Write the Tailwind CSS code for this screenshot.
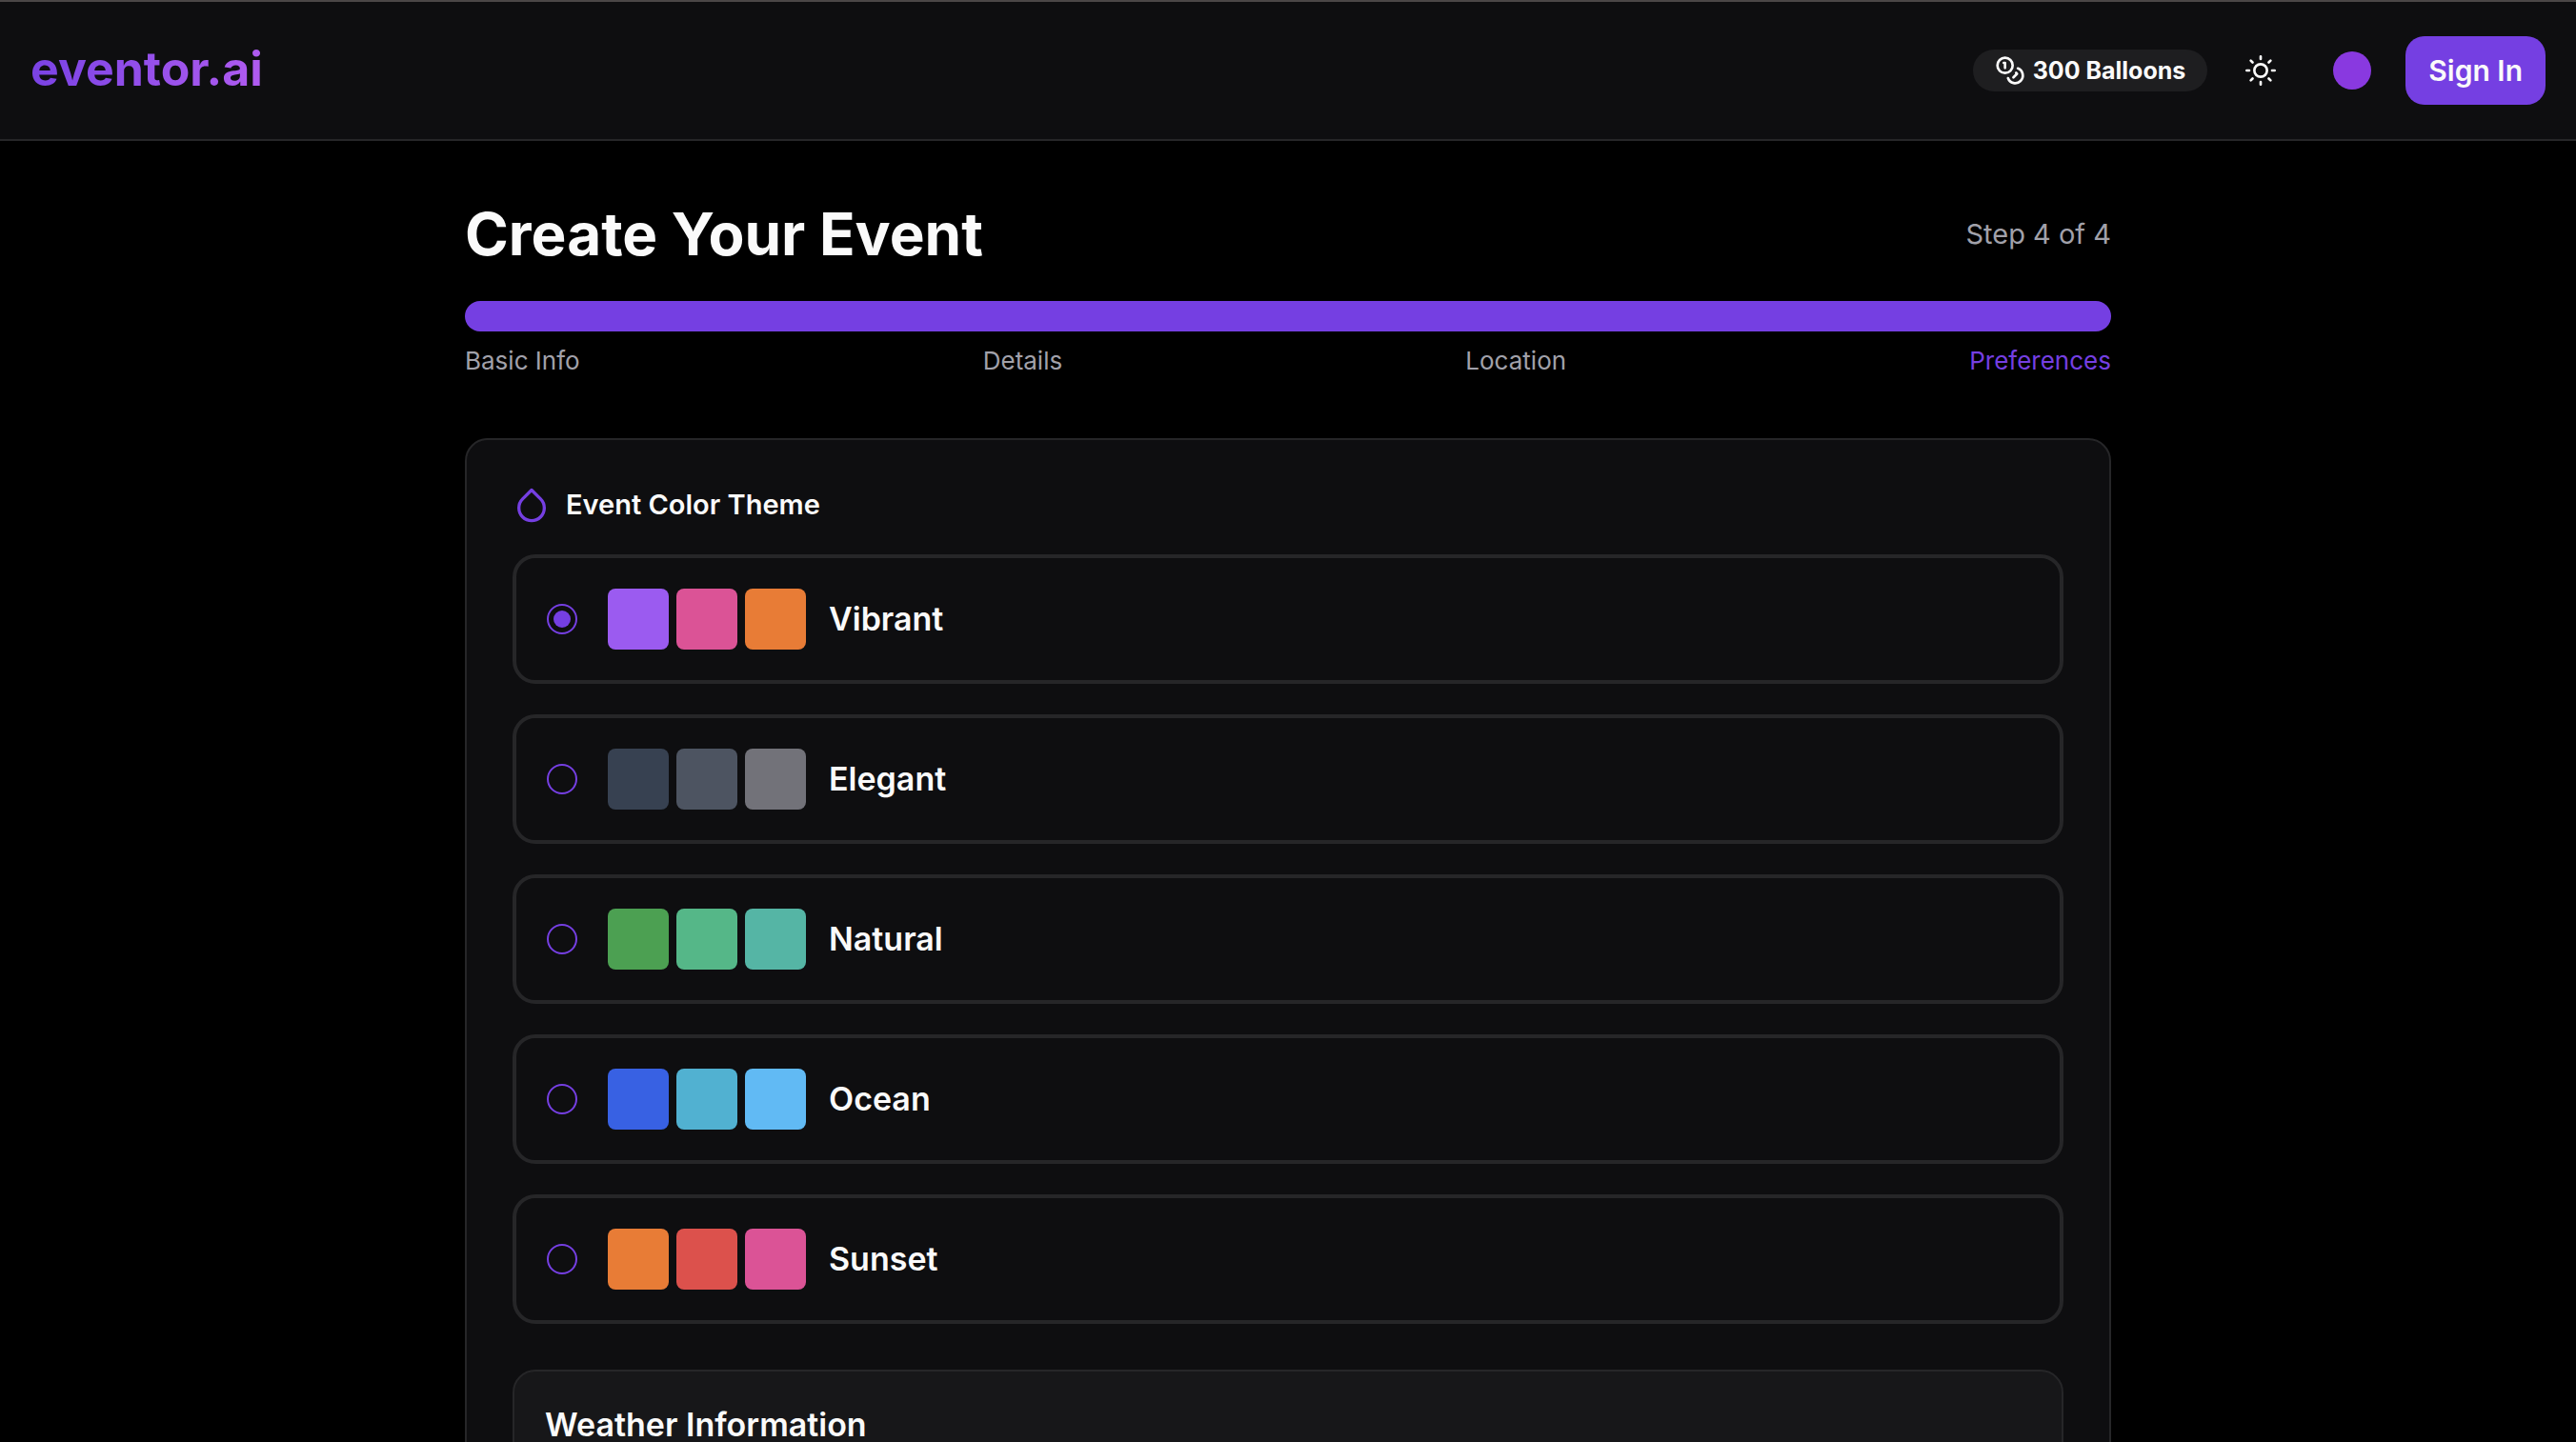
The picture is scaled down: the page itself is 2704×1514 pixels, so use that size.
<!DOCTYPE html>
<html lang="en">
<head>
<meta charset="utf-8">
<meta name="viewport" content="width=device-width, initial-scale=1">
<title>eventor.ai – Create Your Event</title>
<script src="https://cdn.jsdelivr.net/npm/@tailwindcss/browser@4"></script>
</head>
<body class="flex h-screen flex-col overflow-hidden bg-black font-['Inter',sans-serif] text-[#fafafa]">
<header class="flex shrink-0 items-start justify-between border-y-2 border-t-[#4b4747] border-b-[#262628] bg-[#0e0e10] px-8 py-9">
  <a href="#" class="bg-linear-to-r from-[#7a42e4] to-[#b05bf0] bg-clip-text text-[50px] leading-[68px] font-bold text-transparent">eventor.ai</a>
  <div class="flex items-center gap-4">
    <div class="flex h-11 items-center gap-2 rounded-full bg-[#1e1e20] px-[23px] text-[25px] leading-8 font-bold">
      <svg class="size-8" viewBox="0 0 24 24" fill="none" stroke="currentColor" stroke-width="2" stroke-linecap="round" stroke-linejoin="round" aria-hidden="true"><circle cx="8" cy="8" r="6"/><path d="M18.09 10.37A6 6 0 1 1 10.34 18"/><path d="M7 6h1v4"/><path d="m16.71 13.88.7.71-2.82 2.82"/></svg>
      <span>300 Balloons</span>
    </div>
    <button type="button" aria-label="Toggle theme" class="flex h-[72px] w-20 items-center justify-center">
      <svg class="size-8" viewBox="0 0 24 24" fill="none" stroke="currentColor" stroke-width="2" stroke-linecap="round" aria-hidden="true"><circle cx="12" cy="12" r="5"/><path d="M12 1v2M12 21v2M4.22 4.22l1.42 1.42M18.36 18.36l1.42 1.42M1 12h2M21 12h2M4.22 19.78l1.42-1.42M18.36 5.64l1.42-1.42"/></svg>
    </button>
    <button type="button" aria-label="Choose accent color" class="flex h-[72px] w-20 items-center justify-center">
      <span class="size-10 rounded-full bg-[#8939e0]"></span>
    </button>
    <button type="button" class="h-[72px] rounded-[20px] bg-[#753fe2] px-6 text-[30px] leading-10 font-semibold">Sign In</button>
  </div>
</header>

<div class="flex-1 overflow-y-auto [scrollbar-width:none]">
<main class="mx-auto w-full max-w-[1728px] py-16">
  <div class="flex items-center justify-between">
    <h1 class="text-[62px] leading-[68px] font-bold">Create Your Event</h1>
    <span class="text-[29px] leading-10 text-[#a1a1aa]">Step 4 of 4</span>
  </div>
  <div role="progressbar" aria-label="Step 4 of 4" aria-valuenow="100" class="mt-9 h-8 overflow-hidden rounded-full bg-[#262628]">
    <div class="h-full w-full bg-[#753fe2]"></div>
  </div>
  <div class="mt-3 flex justify-between text-[26px] leading-[38px] text-[#a1a1aa]">
    <span>Basic Info</span>
    <span>Details</span>
    <span>Location</span>
    <span class="text-[#753fe2]">Preferences</span>
  </div>

  <form class="mt-[62px] rounded-3xl border-2 border-[#262628] bg-[#0e0e10] p-12">
    <fieldset>
      <legend class="flex items-center gap-4 text-[29px] leading-[38px] font-semibold">
        <svg class="size-10 text-[#753fe2]" viewBox="0 0 24 24" fill="none" stroke="currentColor" stroke-width="2" stroke-linecap="round" stroke-linejoin="round" aria-hidden="true"><path d="M12 2.69l5.66 5.66a8 8 0 1 1-11.31 0z"/></svg>
        Event Color Theme
      </legend>
      <div class="mt-8 flex flex-col gap-8">
        <label class="flex items-center rounded-3xl border-4 border-[#262628] p-8 text-[34px] leading-10 font-semibold">
          <input type="radio" name="theme" value="vibrant" checked class="mr-8 flex size-8 appearance-none items-center justify-center rounded-full border-2 border-[#753fe2] before:size-[18px] before:rounded-full checked:before:bg-[#753fe2]">
          <span class="mr-6 flex gap-2"><span class="size-16 rounded-lg bg-[#9b5bf0]"></span><span class="size-16 rounded-lg bg-[#db5396]"></span><span class="size-16 rounded-lg bg-[#e87c36]"></span></span>
          Vibrant
        </label>
        <label class="flex items-center rounded-3xl border-4 border-[#262628] p-8 text-[34px] leading-10 font-semibold">
          <input type="radio" name="theme" value="elegant" class="mr-8 flex size-8 appearance-none items-center justify-center rounded-full border-2 border-[#753fe2] before:size-[18px] before:rounded-full checked:before:bg-[#753fe2]">
          <span class="mr-6 flex gap-2"><span class="size-16 rounded-lg bg-[#374151]"></span><span class="size-16 rounded-lg bg-[#4d5461]"></span><span class="size-16 rounded-lg bg-[#727279]"></span></span>
          Elegant
        </label>
        <label class="flex items-center rounded-3xl border-4 border-[#262628] p-8 text-[34px] leading-10 font-semibold">
          <input type="radio" name="theme" value="natural" class="mr-8 flex size-8 appearance-none items-center justify-center rounded-full border-2 border-[#753fe2] before:size-[18px] before:rounded-full checked:before:bg-[#753fe2]">
          <span class="mr-6 flex gap-2"><span class="size-16 rounded-lg bg-[#4ca052]"></span><span class="size-16 rounded-lg bg-[#55b788]"></span><span class="size-16 rounded-lg bg-[#55b5a5]"></span></span>
          Natural
        </label>
        <label class="flex items-center rounded-3xl border-4 border-[#262628] p-8 text-[34px] leading-10 font-semibold">
          <input type="radio" name="theme" value="ocean" class="mr-8 flex size-8 appearance-none items-center justify-center rounded-full border-2 border-[#753fe2] before:size-[18px] before:rounded-full checked:before:bg-[#753fe2]">
          <span class="mr-6 flex gap-2"><span class="size-16 rounded-lg bg-[#3861e3]"></span><span class="size-16 rounded-lg bg-[#51b1d1]"></span><span class="size-16 rounded-lg bg-[#61baf4]"></span></span>
          Ocean
        </label>
        <label class="flex items-center rounded-3xl border-4 border-[#262628] p-8 text-[34px] leading-10 font-semibold">
          <input type="radio" name="theme" value="sunset" class="mr-8 flex size-8 appearance-none items-center justify-center rounded-full border-2 border-[#753fe2] before:size-[18px] before:rounded-full checked:before:bg-[#753fe2]">
          <span class="mr-6 flex gap-2"><span class="size-16 rounded-lg bg-[#e87c36]"></span><span class="size-16 rounded-lg bg-[#dc514c]"></span><span class="size-16 rounded-lg bg-[#db5396]"></span></span>
          Sunset
        </label>
      </div>
    </fieldset>
    <section class="mt-12 rounded-3xl border-2 border-[#262628] bg-[#171719] p-8">
      <h2 class="text-[34px] leading-12 font-semibold">Weather Information</h2>
    </section>
  </form>
</main>
</div>
</body>
</html>
